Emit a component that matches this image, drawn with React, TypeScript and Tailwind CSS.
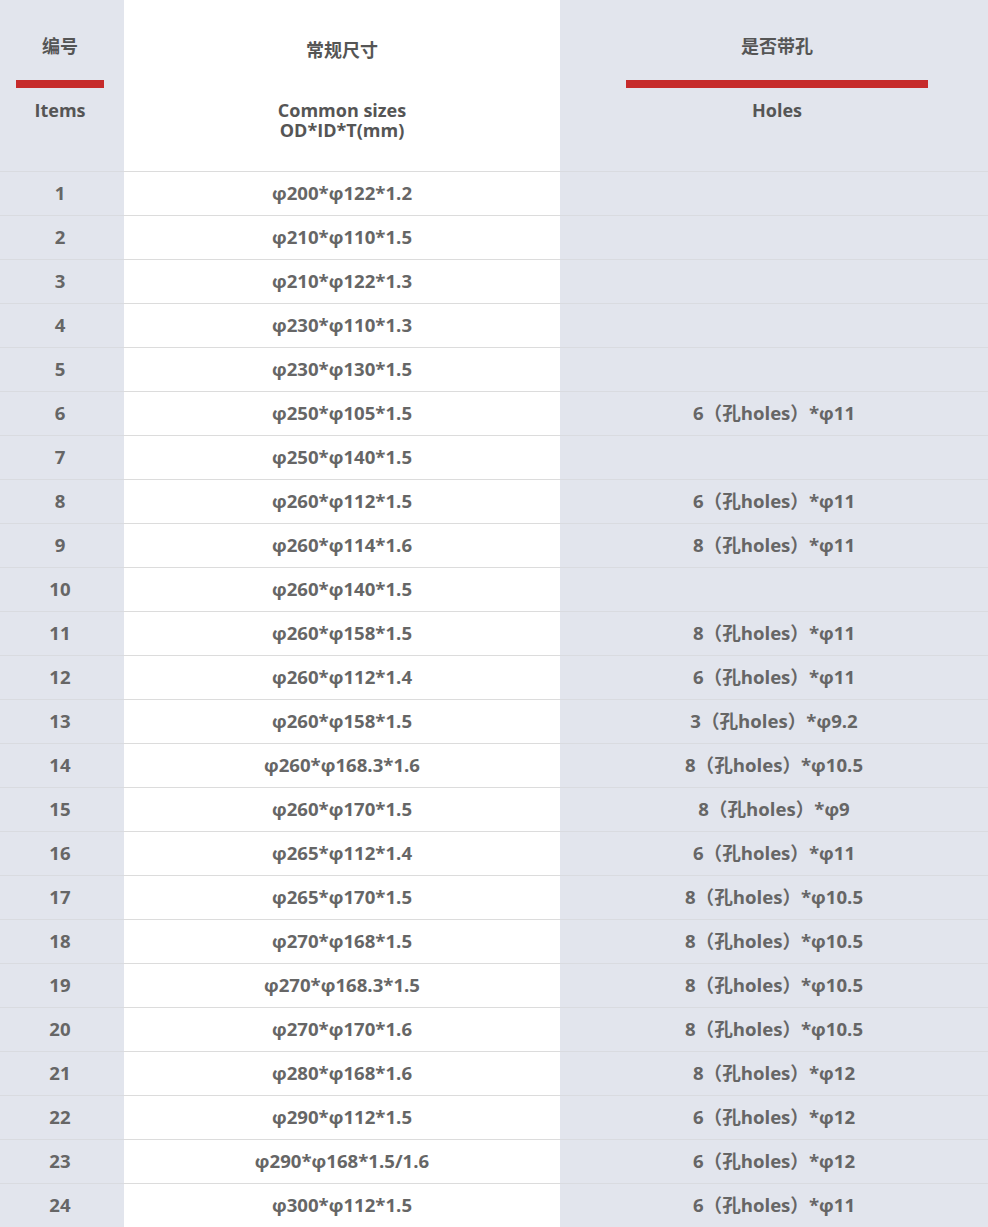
import React from 'react';

const rows: [string, string][] = [
  ['φ200*φ122*1.2', ''],
  ['φ210*φ110*1.5', ''],
  ['φ210*φ122*1.3', ''],
  ['φ230*φ110*1.3', ''],
  ['φ230*φ130*1.5', ''],
  ['φ250*φ105*1.5', '6（孔holes）*φ11'],
  ['φ250*φ140*1.5', ''],
  ['φ260*φ112*1.5', '6（孔holes）*φ11'],
  ['φ260*φ114*1.6', '8（孔holes）*φ11'],
  ['φ260*φ140*1.5', ''],
  ['φ260*φ158*1.5', '8（孔holes）*φ11'],
  ['φ260*φ112*1.4', '6（孔holes）*φ11'],
  ['φ260*φ158*1.5', '3（孔holes）*φ9.2'],
  ['φ260*φ168.3*1.6', '8（孔holes）*φ10.5'],
  ['φ260*φ170*1.5', '8（孔holes）*φ9'],
  ['φ265*φ112*1.4', '6（孔holes）*φ11'],
  ['φ265*φ170*1.5', '8（孔holes）*φ10.5'],
  ['φ270*φ168*1.5', '8（孔holes）*φ10.5'],
  ['φ270*φ168.3*1.5', '8（孔holes）*φ10.5'],
  ['φ270*φ170*1.6', '8（孔holes）*φ10.5'],
  ['φ280*φ168*1.6', '8（孔holes）*φ12'],
  ['φ290*φ112*1.5', '6（孔holes）*φ12'],
  ['φ290*φ168*1.5/1.6', '6（孔holes）*φ12'],
  ['φ300*φ112*1.5', '6（孔holes）*φ11'],
];

const font = { fontFamily: '"Open Sans", "Noto Sans CJK SC", sans-serif' };

const App: React.FC = () => {
  return (
    <div className="w-[988px] bg-[#e2e5ed] font-bold text-[18px] leading-[22px]" style={font}>
      <div className="grid grid-cols-[124px_436px_428px]">
        {/* header */}
        <div className="h-[171px] pr-[4px] bg-[#e2e5ed] flex flex-col items-center text-[#555]">
          <div className="mt-[35px]">编号</div>
          <div className="mt-[23px] w-[88px] h-[8px] bg-[#c62b2b]"></div>
          <div className="mt-[11px]">Items</div>
        </div>
        <div className="h-[171px] bg-white flex flex-col items-center text-[#555] text-center">
          <div className="mt-[39px]">常规尺寸</div>
          <div className="mt-[39px] h-[20px] leading-[20px]">Common sizes</div>
          <div className="h-[21px] leading-[21px]">OD*ID*T(mm)</div>
        </div>
        <div className="h-[171px] pl-[6px] bg-[#e2e5ed] flex flex-col items-center text-[#555]">
          <div className="mt-[35px]">是否带孔</div>
          <div className="mt-[23px] w-[302px] h-[8px] bg-[#c62b2b]"></div>
          <div className="mt-[11px]">Holes</div>
        </div>

        {rows.map(([size, holes], i) => (
          <React.Fragment key={i}>
            <div className="h-[44px] pr-[4px] pb-[2px] border-t border-[#d9dbe0] bg-[#e2e5ed] flex items-center justify-center text-[#666] text-[18.6px]">
              {i + 1}
            </div>
            <div className="h-[44px] pb-[2px] border-t border-[#dcdcdc] bg-white flex items-center justify-center text-[#666] text-[18.6px]">
              {size}
            </div>
            <div className="h-[44px] pb-[2px] border-t border-[#d9dbe0] bg-[#e2e5ed] flex items-center justify-center text-[#666] text-[18.6px]">
              {holes}
            </div>
          </React.Fragment>
        ))}
      </div>
    </div>
  );
};

export default App;
